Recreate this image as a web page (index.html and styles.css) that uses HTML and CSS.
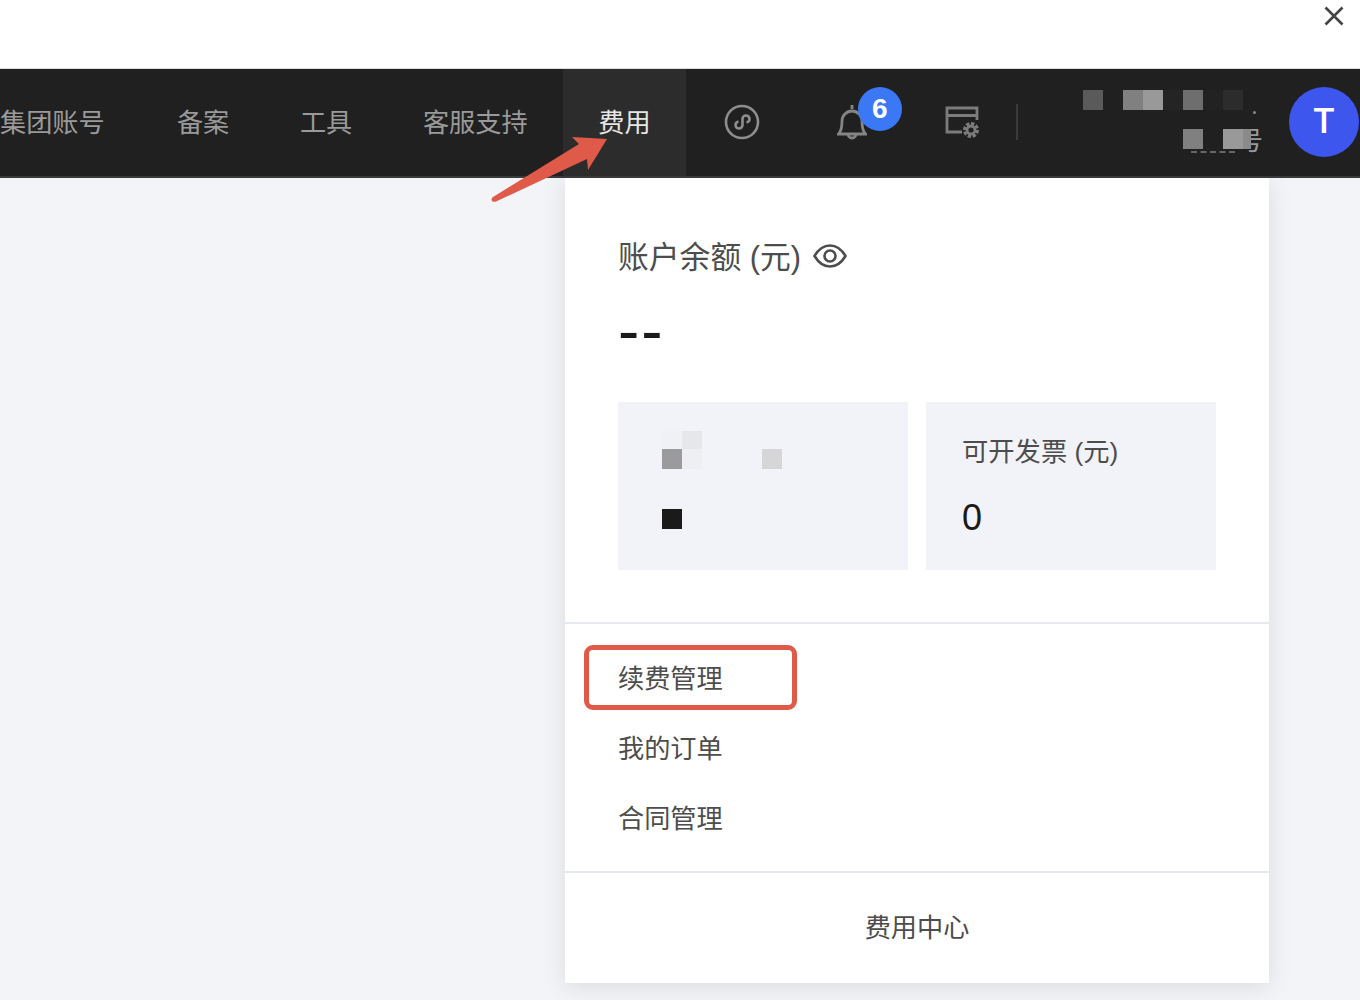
FILE: index.html
```html
<!DOCTYPE html>
<html>
<head>
    <title>费用</title>
    <link rel="stylesheet" href="styles.css">
</head>
<body>

<div class="top-bar">
    <svg class="close-icon" width="20" height="20" viewBox="0 0 20 20"><path d="M1.5 1.5l17 17M18.5 1.5l-17 17"/></svg>
</div>

<header class="nav">
    <a class="nav-item first">集团账号</a>
    <a class="nav-item">备案</a>
    <a class="nav-item">工具</a>
    <a class="nav-item">客服支持</a>
    <a class="nav-item active">费用</a>

    <svg class="icon-mini" width="36" height="36" viewBox="0 0 36 36">
        <circle cx="18" cy="18" r="16"/>
        <path d="M14.5 17.5C12.5 18 11.5 19.5 11.5 21a3.5 3.5 0 0 0 7 0v-6a3.5 3.5 0 0 1 7 0c0 1.500-1 3-3 3.500"/>
    </svg>

    <div class="bell">
        <svg width="30" height="36" viewBox="0 0 30 36">
            <path d="M15 1v4M1.500 30c3-3 3.500-7 3.500-13a10 10 0 0 1 20 0c0 6 .5 10 3.500 13zM11 30a4 4 0 0 0 8 0"/>
        </svg>
        <span class="badge">6</span>
    </div>

    <svg class="icon-settings" width="34" height="32" viewBox="0 0 34 32">
        <path d="M17 26H2V2h30v12M2 9.500h30"/>
        <circle class="gear-teeth" cx="26" cy="24" r="6.500" pathLength="24"/>
        <circle cx="26" cy="24" r="4"/>
    </svg>

    <div class="nav-divider"></div>

    <!-- замазанное имя пользователя -->
    <div class="mosaic user-mosaic">
        <span class="m-55"></span><span></span><span class="m-80"></span><span class="m-99"></span><span class="m-24"></span><span class="m-70"></span><span class="m-22"></span><span class="m-2c"></span><span></span>
        <span></span><span></span><span></span><span></span><span></span><span class="m-80"></span><span></span><span class="m-99 over-tail"></span><span class="tail-cell">号</span>
        <i class="mosaic-dot"></i>
        <i class="mosaic-crumbs"></i>
    </div>

    <div class="avatar">T</div>
</header>

<div class="content">
    <div class="dropdown">
        <section class="balance">
            <div class="balance-title">
                账户余额 (元)
                <svg class="eye" width="34" height="24" viewBox="0 0 34 24">
                    <path d="M1.500 12C6 4.500 11 1.500 17 1.500S28 4.500 32.500 12C28 19.500 23 22.500 17 22.500S6 19.500 1.500 12z"/>
                    <circle cx="17" cy="12" r="5.500"/>
                </svg>
            </div>
            <div class="balance-value">--</div>
            <div class="cards">
                <div class="card">
                    <div class="mosaic card-mosaic">
                        <span class="m-f0"></span><span class="m-e6"></span><span></span><span></span><span></span><span></span>
                        <span class="m-9b"></span><span class="m-ee"></span><span></span><span></span><span></span><span class="m-d6"></span>
                    </div>
                    <div class="mosaic card-mosaic low">
                        <span class="m-1a"></span>
                    </div>
                </div>
                <div class="card">
                    <div class="card-title">可开发票 (元)</div>
                    <div class="card-value">0</div>
                </div>
            </div>
        </section>

        <ul class="menu">
            <li>续费管理<span class="red-box"></span></li>
            <li>我的订单</li>
            <li>合同管理</li>
        </ul>

        <div class="dropdown-footer">费用中心</div>
    </div>
</div>

<!-- стрелка-пометка поверх страницы -->
<svg class="arrow" width="140" height="80" viewBox="0 0 140 80">
    <path d="M7 67L93 14 86 7 121 9 102 40 101 29 10 71.500C6 73 4 69 7 67z"/>
</svg>

</body>
</html>
```

FILE: styles.css
```css
body {
    margin: 0;
    height: 1000px;
    overflow: hidden;
    position: relative;
    background-color: #f3f4f8;
    font-family: "Liberation Sans", "Noto Sans CJK SC", sans-serif;
}

.top-bar {
    height: 68px;
    background-color: #fff;
    display: flex;
    justify-content: flex-end;
    align-items: flex-start;
    padding: 6px 16px 0 0;
    box-sizing: border-box;
}
.close-icon path {
    fill: none;
    stroke: #444;
    stroke-width: 2.6;
}

/* Верхнее меню */
.nav {
    position: relative;
    z-index: 1;
    height: 110px;
    box-sizing: border-box;
    display: flex;
    align-items: center;
    padding-right: 1px;
    background-color: #202020;
    border-top: 1px solid #dcdcdc;
    border-bottom: 2px solid #3a3a3a;
}
.nav-item {
    height: 100%;
    box-sizing: border-box;
    display: flex;
    align-items: center;
    padding: 0 35.3px 4px;
    font-size: 26.2px;
    color: #9a9a9a;
}
.nav-item.first {
    padding-left: 0;
    padding-right: 36.9px;
}
.nav-item.active {
    background-color: #2c2c2c;
    color: #e6e6e6;
}

.icon-mini {
    margin-left: 38px;
    margin-bottom: 2px;
}
.icon-mini circle,
.icon-mini path {
    fill: none;
    stroke: #8e8e8e;
    stroke-width: 2.6;
}

.bell {
    position: relative;
    width: 30px;
    height: 36px;
    margin-left: 77px;
    margin-bottom: 2px;
}
.bell path {
    fill: none;
    stroke: #858585;
    stroke-width: 2.8;
}
.badge {
    position: absolute;
    left: 21px;
    top: -17px;
    width: 44px;
    height: 44px;
    border-radius: 50%;
    background-color: #3a78f5;
    color: #fff;
    font-size: 28px;
    font-weight: bold;
    line-height: 44px;
    text-align: center;
}

.icon-settings {
    margin-left: 78px;
    margin-bottom: 2px;
}
.icon-settings path,
.icon-settings circle {
    fill: none;
    stroke: #7c7c7c;
    stroke-width: 2.8;
}
.icon-settings .gear-teeth {
    stroke-width: 3;
    stroke-dasharray: 2 1;
}

.nav-divider {
    width: 2px;
    height: 36px;
    margin-left: 37px;
    margin-bottom: 2px;
    background-color: #3a3a3a;
}

/* Мозаика вместо скрытых данных */
.mosaic {
    display: grid;
    grid-template-columns: repeat(9, 20px);
    grid-auto-rows: 20px;
}
.user-mosaic {
    position: relative;
    width: 180px;
    margin-left: auto;
    margin-bottom: 6px;
    row-gap: 19px;
}
.card-mosaic {
    grid-template-columns: repeat(6, 20px);
}
.card-mosaic span:nth-child(n+7) {
    height: 20px;
    margin-top: -2px;
}
.card-mosaic.low {
    margin-top: 38px;
}
.over-tail {
    position: relative;
    z-index: 1;
}
.tail-cell {
    position: relative;
    width: 20px;
    height: 24px;
    font-size: 26px;
    line-height: 24px;
    color: #999;
    text-indent: -6px;
    white-space: nowrap;
}
.tail-cell::before {
    content: "";
    position: absolute;
    left: 0;
    top: 0;
    width: 8px;
    height: 20px;
    background-color: #8a8a8a;
}
.mosaic-dot {
    position: absolute;
    left: 170px;
    top: 21px;
    width: 3px;
    height: 3px;
    border-radius: 50%;
    background-color: #888;
}
.mosaic-crumbs {
    position: absolute;
    left: 108px;
    top: 61px;
    width: 44px;
    border-top: 2px dashed #666;
}
.m-1a { background-color: #1a1a1a; }
.m-22 { background-color: #222; }
.m-24 { background-color: #242424; }
.m-2c { background-color: #2c2c2c; }
.m-55 { background-color: #5a5a5a; }
.m-70 { background-color: #6e6e6e; }
.m-80 { background-color: #808080; }
.m-99 { background-color: #999; }
.m-9b { background-color: #9b9b9d; }
.m-d6 { background-color: #d6d6d9; }
.m-e6 { background-color: #e6e7ea; }
.m-ee { background-color: #eeeff2; }
.m-f0 { background-color: #f0f1f4; }

.avatar {
    width: 70px;
    height: 70px;
    margin-left: 26px;
    margin-bottom: 2px;
    border-radius: 50%;
    background-color: #3d56ee;
    color: #fff;
    font-family: Roboto, sans-serif;
    font-weight: 500;
    font-size: 35px;
    line-height: 70px;
    text-align: center;
}

/* Выпадающая панель */
.content {
    padding-left: 565px;
}
.dropdown {
    width: 704px;
    height: 805px;
    background-color: #fff;
    box-shadow: 0 4px 24px rgba(0, 0, 0, 0.1);
}
.balance {
    padding: 56px 53px 52px;
    border-bottom: 2px solid #e8e9ef;
}
.balance-title {
    display: flex;
    align-items: center;
    gap: 12px;
    height: 40px;
    font-size: 30.8px;
    color: #4d4d4d;
}
.balance-value {
    height: 107px;
    padding-top: 21px;
    font-size: 64px;
    line-height: 72px;
    letter-spacing: 2px;
    color: #1a1a1a;
}
.eye {
    margin-top: 4px;
}
.eye path,
.eye circle {
    fill: none;
    stroke: #4d4d4d;
    stroke-width: 2.6;
}
.cards {
    display: flex;
    gap: 18px;
}
.card {
    width: 290px;
    height: 168px;
    box-sizing: border-box;
    padding: 29px 36px;
    background-color: #f2f3f8;
}
.card .card-mosaic {
    margin-left: 8px;
}
.card-title {
    padding-top: 1px;
    font-size: 26.3px;
    line-height: 40px;
    color: #4d4d4d;
}
.card-value {
    margin-top: 26px;
    font-size: 36px;
    line-height: 40px;
    color: #1a1a1a;
}

.menu {
    list-style-type: none;
    margin: 0;
    padding: 20px 53px 17px;
    border-bottom: 2px solid #e8e9ef;
}
.menu li {
    position: relative;
    height: 70px;
    line-height: 70px;
    font-size: 26.2px;
    color: #4d4d4d;
}
.red-box {
    position: absolute;
    left: -34px;
    top: 1px;
    width: 213px;
    height: 65px;
    box-sizing: border-box;
    border: 5px solid #e05a49;
    border-radius: 9px;
}

.dropdown-footer {
    height: 110px;
    line-height: 110px;
    text-align: center;
    font-size: 26.2px;
    color: #4d4d4d;
}

.arrow {
    position: absolute;
    z-index: 2;
    left: 486px;
    top: 130px;
}
.arrow path {
    fill: #e05a49;
}
```
